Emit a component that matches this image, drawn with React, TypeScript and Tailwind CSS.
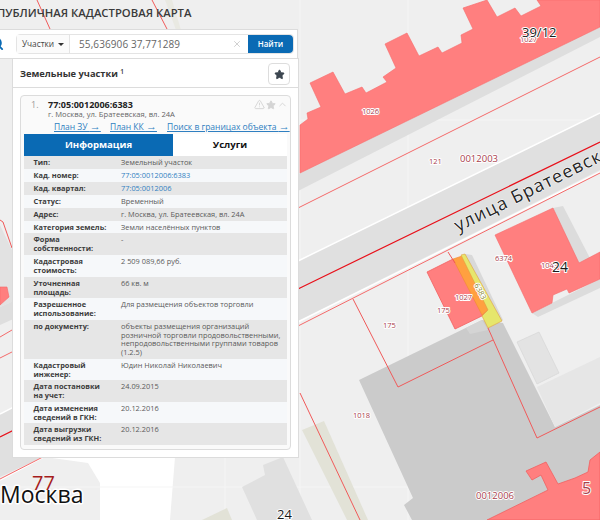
import React from 'react';
import { Search, Star, TriangleAlert, ChevronUp, X } from 'lucide-react';

interface InfoRow {
    label: string;
    value: string;
    link?: boolean;
    height: string;
}

const rows: InfoRow[] = [
    { label: 'Тип:', value: 'Земельный участок', height: 'h-[13px]' },
    { label: 'Кад. номер:', value: '77:05:0012006:6383', link: true, height: 'h-[13px]' },
    { label: 'Кад. квартал:', value: '77:05:0012006', link: true, height: 'h-[13px]' },
    { label: 'Статус:', value: 'Временный', height: 'h-[13px]' },
    { label: 'Адрес:', value: 'г. Москва, ул. Братеевская, вл. 24А', height: 'h-[13px]' },
    { label: 'Категория земель:', value: 'Земли населённых пунктов', height: 'h-[12px]' },
    { label: 'Форма собственности:', value: '-', height: 'h-[22px]' },
    { label: 'Кадастровая стоимость:', value: '2 509 089,66 руб.', height: 'h-[22px]' },
    { label: 'Уточненная площадь:', value: '66 кв. м', height: 'h-[21px]' },
    { label: 'Разрешенное использование:', value: 'Для размещения объектов торговли', height: 'h-[22px]' },
    {
        label: 'по документу:',
        value: 'объекты размещения организаций розничной торговли продовольственными, непродовольственными группами товаров (1.2.5)',
        height: 'h-[39px]'
    },
    { label: 'Кадастровый инженер:', value: 'Юдин Николай Николаевич', height: 'h-[21px]' },
    { label: 'Дата постановки на учет:', value: '24.09.2015', height: 'h-[22px]' },
    { label: 'Дата изменения сведений в ГКН:', value: '20.12.2016', height: 'h-[21px]' },
    { label: 'Дата выгрузки сведений из ГКН:', value: '20.12.2016', height: 'h-[22px]' }
];

const Label: React.FC<{ x: number; y: number; size?: number; fill?: string; weight?: number; halo?: number; rotate?: number; spacing?: number; children: string }> = ({
    x,
    y,
    size = 7.5,
    fill = '#a8404c',
    weight = 400,
    halo = 2,
    rotate,
    spacing,
    children
}) => (
    <text
        x={x}
        y={y}
        fontSize={size}
        fill={fill}
        fontWeight={weight}
        stroke="#ffffff"
        strokeWidth={halo}
        strokeLinejoin="round"
        letterSpacing={spacing}
        transform={rotate ? `rotate(${rotate} ${x} ${y})` : undefined}
        className="[paint-order:stroke] font-['Open_Sans',sans-serif]"
    >
        {children}
    </text>
);

const MapLayer: React.FC = () => (
    <svg className="absolute inset-0" width="600" height="520" viewBox="0 0 600 520">
        <rect width="600" height="520" fill="#efefef" />
        {/* white patch under the panel */}
        <polygon points="45,457 88,463 100,483 100,520 170,520 175,457" fill="#ffffff" />
        <polygon points="165,0 172,0 181,30 176,30" fill="#e9e9e2" />
        {/* tile seams */}
        <path d="M408 0V520M225 457V520M300 0V520M0 487H600M300 120H600" stroke="#f5f5f5" strokeWidth="1" />
        {/* grey strips and roads */}
        <polygon points="600,27 600,37 300,190 0,325 0,307 300,173" fill="#dedede" />
        <polygon points="600,113 600,170 300,320 45,456 0,477 0,414 300,260" fill="#e0e0e0" />
        <path d="M600 113L300 260L0 414M600 172L300 321L0 480" stroke="#ffffff" strokeWidth="1.5" fill="none" />
        <polygon points="0,225 12,250 12,302 0,307" fill="#e2e2e2" />
        {/* plots and buildings */}
        <polygon points="359,380 482,320 503,323 555,427 600,405 600,520 412,520 404,505 413,498" fill="#cbcbcb" />
        <polygon points="537,387 600,357 600,403 555,427" fill="#e6e6e6" />
        <polygon points="517,342 539,332 559,373 537,384" fill="#e3e3e3" stroke="#d4d4d4" strokeWidth="0.6" />
        <polygon points="465,254 472,255 503,320 488,328" fill="#d9d9d9" />
        <polygon points="466,328 482,320 488,330 470,334" fill="#d4d4d4" />
        <polygon points="553,208 563,206 592,262 579,268" fill="#dcdcdc" />
        <polygon points="532,313 600,279 600,288 538,317" fill="#dcdcdc" />
        <polygon points="302,430 324,421 368,520 347,520" fill="#e2e2d7" />
        <polygon points="202,520 227,508 232,520" fill="#e2e2d7" />
        <polygon points="242,487 265,475 263,465 283,457 312,520 257,520" fill="#e0e0e0" />

        <polygon
            points="300,125 308,119 307,113 321,107 310,83 333,72 345,94 362,87 366,93 387,82 383,77 396,68 385,44 407,33 419,56 438,47 442,53 462,43 461,35 473,29 463,8 487,0 497,17 515,8 521,16 541,6 537,0 600,0 600,27 300,173"
            fill="#ff7f7f"
            stroke="#f76a6a"
            strokeWidth="0.6"
        />
        <polygon points="0,287 7,287 9,297 0,305" fill="#ff7f7f" stroke="#f76a6a" strokeWidth="0.6" />
        <polygon points="495,235 553,208 579,263 600,252 600,279 569,293 567,289 553,295 552,303 532,313" fill="#ff7f7f" stroke="#f76a6a" strokeWidth="0.6" />
        <polygon points="427,272 453,259 488,313 455,329" fill="#ff7f7f" stroke="#f25f5f" strokeWidth="0.8" />
        <polygon points="487,520 548,490 541,475 532,480 526,471 546,462 558,484 575,478 588,472 590,460 600,452 600,520" fill="#ff7f7f" stroke="#f25f5f" strokeWidth="0.8" />
        <polygon points="453,259 465,255 488,310 482,315" fill="#ffa040" stroke="#f08a30" strokeWidth="0.6" />
        <polygon points="461,255 465,254 502,321 488,328 482,316 488,310" fill="#e6e66c" stroke="#e0a040" strokeWidth="0.6" />

        {/* cadastral lines */}
        <path d="M37 0L50 29M152 0L167 29" stroke="#f05a5a" strokeWidth="1" fill="none" />
        <path d="M600 57L300 207L0 358" stroke="#f46a6a" strokeWidth="1" fill="none" />
        <path d="M600 142L300 288L0 437" stroke="#e8101a" strokeWidth="1.2" fill="none" />
        <path d="M600 173L300 325L0 479" stroke="#f46a6a" strokeWidth="1" fill="none" />
        <path d="M0 337L12 330" stroke="#f46a6a" strokeWidth="1" />
        <path d="M0 220L3 222L12 248" stroke="#f05a5a" strokeWidth="1" fill="none" />
        <path d="M448 252L455 263M353 299L398 387L493 340M488 328L537 438L600 407" stroke="#f05a5a" strokeWidth="1" fill="none" />
        <path d="M300 393L360 520" stroke="#f05a5a" strokeWidth="1" fill="none" />

        {/* labels */}
        <Label x={520} y={42}>1027</Label>
        <Label x={522} y={37} size={13} fill="#1a1a1a" halo={2}>39/12</Label>
        <Label x={362} y={114}>1026</Label>
        <Label x={429} y={164}>121</Label>
        <Label x={460} y={162} size={9.5}>0012003</Label>
        <Label x={495} y={261}>6374</Label>
        <Label x={541} y={268}>1043</Label>
        <Label x={552} y={272} size={14} fill="#1a1a1a">24</Label>
        <Label x={474} y={285} size={7.5} fill="#8a8a30" rotate={62}>6383</Label>
        <Label x={455} y={300}>1027</Label>
        <Label x={437} y={313}>175</Label>
        <Label x={383} y={328}>175</Label>
        <Label x={353} y={418}>1018</Label>
        <Label x={476} y={499} size={9.5}>0012006</Label>
        <Label x={582} y={494} size={16} fill="#a8404c">5</Label>
        <Label x={277} y={519} size={13} fill="#1a1a1a">24</Label>
        <Label x={458} y={232} size={18} fill="#262626" halo={1} rotate={-26.2} spacing={1.1}>улица Братеевск</Label>
        <Label x={0} y={503} size={23} fill="#111111" weight={500} halo={3}>Москва</Label>
        <Label x={32} y={490} size={20} fill="#a51c1c" halo={0}>77</Label>
    </svg>
);

export default function App() {
    return (
        <div className="relative w-[600px] h-[520px] overflow-hidden font-['Open_Sans',sans-serif] text-[#333]">
            <MapLayer />

            <div className="absolute left-[-3px] top-[5px] text-[11.3px] font-semibold leading-4 text-[#3a3a3a] whitespace-nowrap">
                ПУБЛИЧНАЯ КАДАСТРОВАЯ КАРТА
            </div>

            {/* search bar */}
            <div className="absolute left-0 top-[29px] w-[298px] h-[30px] bg-white border border-[#dcdcdc] border-l-0 flex items-center pl-[16px] pr-[3px]">
                <Search className="absolute left-[-11px] top-[6px] w-[15px] h-[15px] text-[#0a6ab4]" strokeWidth={3} />
                <div className="flex flex-1 h-[20px] border border-[#e4e4e4] rounded-sm items-stretch">
                    <div className="w-[53px] flex items-center justify-center gap-[4px] text-[8.3px] text-[#444] border-r border-[#e4e4e4] bg-[#fbfbfb]">
                        Участки
                        <span className="w-0 h-0 border-x-[3px] border-x-transparent border-t-[3px] border-t-[#333]" />
                    </div>
                    <div className="flex-1 flex items-center pl-[9px] text-[10px] tracking-[0.1px] text-[#666]">55,636906 37,771289</div>
                    <X className="w-[10px] h-[10px] self-center mr-[6px] text-[#c8c8c8]" strokeWidth={2} />
                    <button className="w-[45px] bg-[#0a6ab4] rounded-r-sm text-white text-[8px] font-semibold">Найти</button>
                </div>
            </div>

            {/* results panel */}
            <div className="absolute left-[12px] top-[58px] w-[287px] h-[400px] bg-white border border-[#dcdcdc] flex flex-col">
                <div className="h-[29px] shrink-0 border-b border-[#dcdcdc] flex items-center justify-between pl-[7px] pr-[8px]">
                    <div className="text-[9.3px] font-bold text-[#333] leading-none pt-[2px]">
                        Земельные участки <sup className="text-[6.5px] font-semibold">1</sup>
                    </div>
                    <button className="w-[22px] h-[22px] mt-[2px] border border-[#ddd] rounded-sm flex items-center justify-center bg-white">
                        <Star className="w-[11px] h-[11px] text-[#3c4650] fill-[#3c4650]" />
                    </button>
                </div>

                <div className="mt-[7px] mx-[7px] h-[355px] border border-[#dcdcdc] rounded-sm bg-[#fafafa] px-[3px] flex flex-col">
                    <div className="relative h-[38px] shrink-0">
                        <div className="absolute left-[7px] top-[2px] text-[9px] text-[#999]">1.</div>
                        <div className="absolute left-[24px] top-[2px] text-[9px] font-bold text-[#222]">77:05:0012006:6383</div>
                        <div className="absolute left-[24px] top-[13px] text-[7.6px] text-[#666]">г. Москва, ул. Братеевская, вл. 24А</div>
                        <div className="absolute right-[-1px] top-[3px] flex items-center gap-[1px] text-[#d4d4d4]">
                            <TriangleAlert className="w-[11px] h-[11px]" />
                            <Star className="w-[10px] h-[10px] fill-[#d4d4d4]" />
                            <ChevronUp className="w-[11px] h-[11px]" />
                        </div>
                        <div className="absolute left-[30px] top-[25px] flex items-center h-[12px] text-[8.5px] text-[#2f7fc1] underline whitespace-nowrap">
                            <span className="w-[56px]">План ЗУ <span className="text-[11px] leading-none">→</span></span>
                            <span className="w-[57px]">План КК <span className="text-[11px] leading-none">→</span></span>
                            <span>Поиск в границах объекта <span className="text-[11px] leading-none">→</span></span>
                        </div>
                    </div>

                    <div className="flex h-[22px] shrink-0 text-[9.6px] font-bold">
                        <div className="w-[149px] bg-[#0a6ab4] text-white flex items-center justify-center">Информация</div>
                        <div className="flex-1 bg-white text-[#111] flex items-center justify-center">Услуги</div>
                    </div>

                    <div className="text-[7.4px] leading-[8.7px]">
                        {rows.map((row, i) => (
                            <div
                                key={row.label}
                                className={`grid grid-cols-[87.5px_1fr] pl-[9.5px] pr-[6px] pt-[2px] overflow-hidden ${row.height} ${i % 2 === 0 ? 'bg-[#e6e6e6]' : 'bg-[#f6f8fa]'}`}
                            >
                                <div className="font-bold text-[#3c3c3c] pr-[14px]">{row.label}</div>
                                <div className={row.link ? 'text-[#2f7fc1]' : 'text-[#5a5a5a]'}>{row.value}</div>
                            </div>
                        ))}
                    </div>
                </div>
            </div>
        </div>
    );
}
